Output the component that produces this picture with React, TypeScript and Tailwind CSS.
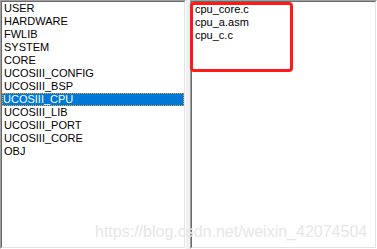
import React from "react";

const left = [
  "USER",
  "HARDWARE",
  "FWLIB",
  "SYSTEM",
  "CORE",
  "UCOSIII_CONFIG",
  "UCOSIII_BSP",
  "UCOSIII_CPU",
  "UCOSIII_LIB",
  "UCOSIII_PORT",
  "UCOSIII_CORE",
  "OBJ",
];

const right = ["cpu_core.c", "cpu_a.asm", "cpu_c.c"];

export default function App() {
  return (
    <div
      className="relative w-[377px] h-[249px] bg-[#f0f0f0] flex gap-[4px] overflow-hidden"
      style={{ fontFamily: '"Liberation Sans", Arial, sans-serif' }}
    >
      <div className="w-[186px] h-[249px] border-t border-l border-r border-b border-t-[#a0a0a0] border-l-[#a0a0a0] border-r-[#ffffff] border-b-[#ffffff]">
        <div className="w-full h-full bg-white border-t border-l border-r border-b border-t-[#696969] border-l-[#696969] border-r-[#e3e3e3] border-b-[#e3e3e3] text-[11px] leading-[13px] text-black">
          {left.map((t) => (
            <div
              key={t}
              className={
                t === "UCOSIII_CPU"
                  ? "h-[13px] pl-[1px] bg-[#0078d7] text-white outline outline-1 outline-dotted outline-offset-[-1px] outline-[#f5a623]"
                  : "h-[13px] pl-[2px]"
              }
            >
              {t}
            </div>
          ))}
        </div>
      </div>
      <div className="w-[187px] h-[249px] border-t border-l border-r border-b border-t-[#a0a0a0] border-l-[#a0a0a0] border-r-[#ffffff] border-b-[#ffffff]">
        <div className="relative w-full h-full bg-white border-t border-l border-r border-b border-t-[#696969] border-l-[#696969] border-r-[#e3e3e3] border-b-[#e3e3e3] text-[11px] leading-[13px] text-black pl-[3px] pt-[1px]">
          {right.map((t) => (
            <div key={t} className="h-[13px]">
              {t}
            </div>
          ))}
          <div className="absolute left-[-2px] top-[0px] w-[103px] h-[70px] border-[3px] border-[#ff1a1a] rounded-[4px]" />
        </div>
      </div>
      <div className="absolute left-[95px] top-[223px] text-[16px] leading-[18px] text-[#e6e6e6] whitespace-nowrap pointer-events-none">
        https://blog.csdn.net/weixin_42074504
      </div>
    </div>
  );
}
